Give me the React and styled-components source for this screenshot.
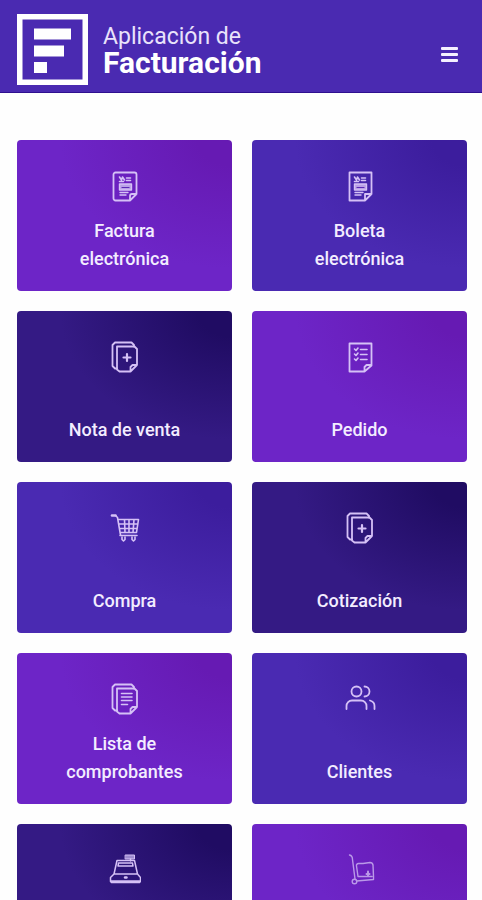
import React from "react";
import styled, {createGlobalStyle} from "styled-components";

const tones = {
    violet: {base: '#6d25c7', corner: '#661ab3'},
    blue: {base: '#4a2ab2', corner: '#3c1d9d'},
    navy: {base: '#341a84', corner: '#200c63'},
}

const GlobalStyle = createGlobalStyle`
  * {
    box-sizing: border-box;
  }
  body {
    margin: 0;
    background: #fefefe;
    font-family: Roboto, "Liberation Sans", sans-serif;
  }
`
const Header = styled.header`
  display: flex;
  align-items: center;
  justify-content: space-between;
  padding: 14px 24px 7px 17px;
  background: #4a2ab1;
  border-bottom: 1px solid #2f108f;
`
const Brand = styled.a`
  display: flex;
  align-items: center;
  gap: 15px;
  color: #fff;
  text-decoration: none;
`
const BrandName = styled.span`
  display: flex;
  flex-direction: column;
  font-size: 23px;
  line-height: 26px;
  color: #e9e2fb;
`
const BrandStrong = styled.strong`
  font-size: 30px;
  font-weight: 700;
  color: #fff;
`
const MenuButton = styled.button`
  display: flex;
  flex-direction: column;
  gap: 3px;
  padding: 12px 0;
  margin-top: 10px;
  border: 0;
  background: none;
  cursor: pointer;
`
const MenuLine = styled.span`
  width: 17px;
  height: 3px;
  border-radius: 1px;
  background: #f4f0ff;
`
const Grid = styled.main`
  display: grid;
  grid-template-columns: repeat(2, 1fr);
  grid-auto-rows: 151px;
  gap: 20px;
  padding: 47px 15px 20px 17px;
`
const Card = styled.a`
  display: flex;
  flex-direction: column;
  align-items: center;
  justify-content: space-between;
  padding: 30px 24px 18px;
  border-radius: 4px;
  color: #f3edff;
  text-decoration: none;
  background: ${({tone}) => `radial-gradient(ellipse 80% 85% at 100% 0%, ${tones[tone].corner} 20%, ${tones[tone].base} 100%)`};
`
const CardLabel = styled.span`
  max-width: 130px;
  font-size: 18px;
  font-weight: 500;
  line-height: 28px;
  text-align: center;
`
const Icon = styled.svg`
  flex: none;
  width: 32px;
  height: 32px;
  fill: none;
  stroke: #d5c1f6;
  stroke-width: 1.8;
  stroke-linecap: round;
  stroke-linejoin: round;
`

const Logo = () => (
    <svg width="71" height="71" viewBox="0 0 71 71" aria-hidden="true">
        <rect x="2.75" y="2.75" width="65.5" height="65.5" fill="none" stroke="#fff" strokeWidth="5.5"/>
        <path fill="#fff" d="M17 14.5h37v11H17zM17 31.5h30v11H17zM17 48h13v11H17z"/>
    </svg>
)

// the printed part shared by the two tax documents
const PrintedLines = () => (
    <>
        <path strokeWidth="1.6" d="M10.5 7l2 3 1-3 2 3M17.5 8h4M17.500 10.500h4M10.5 11.5h4"/>
        <path fill="#b9a0e6" strokeWidth="1.4" d="M10.5 14h12v6h-12z"/>
        <path strokeWidth="1.4" d="M11 22.5h8M11 25h6"/>
        <path stroke="#5b2ab5" strokeWidth="1.2" d="M13 17.5h7"/>
    </>
)

const InvoiceIcon = () => (
    <Icon viewBox="0 0 32 32" aria-hidden="true">
        <path d="M21 30.5H6.5a2 2 0 0 1-2-2v-24a2 2 0 0 1 2-2h19a2 2 0 0 1 2 2V24zM21 30.5V26a2 2 0 0 1 2-2h4.5"/>
        <PrintedLines/>
    </Icon>
)

const TicketIcon = () => (
    <Icon viewBox="0 0 32 32" aria-hidden="true">
        <path d="M21 30.5H5.5v-28h22V24zM21 30.5V24h6.5"/>
        <PrintedLines/>
    </Icon>
)

// two stacked sheets, the front one takes its drawing from children
const SheetsIcon = ({children}) => (
    <Icon viewBox="0 0 32 32" aria-hidden="true">
        <path d="M8 27.5H6L3.5 25V4L6 1.5h16.5L25 4v1.5"/>
        <path d="M21.5 30.5h-11l-2.500-2v-23h17.500l2.5 2.500v16zM21.5 30.5V26l2-2H28"/>
        {children}
    </Icon>
)

const AddSheetIcon = () => (
    <SheetsIcon>
        <path strokeWidth="2.2" d="M18 13v7M14.500 16.500h7"/>
    </SheetsIcon>
)

const ListSheetIcon = () => (
    <SheetsIcon>
        <path strokeWidth="1.6" d="M12.5 10.5H23M12.5 14H23M12.5 17.5H23M12.5 21.5h6"/>
    </SheetsIcon>
)

const OrderIcon = () => (
    <Icon viewBox="0 0 32 32" aria-hidden="true">
        <path d="M20.5 30.5h-15v-28h22v22zM20.5 30.5V26l2-2h5"/>
        <path strokeWidth="1.6" d="M10.5 8l1.500 1.500L14 7M16.5 8.5H23M10.5 13l1.500 1.500L14 12M16.5 13.5H23M10.5 18l1.500 1.500L14 17M16.5 18.5H23"/>
    </Icon>
)

const CartIcon = () => (
    <Icon viewBox="0 0 32 32" aria-hidden="true">
        <path strokeWidth="2.600" d="M3 3.500h3.500"/>
        <path strokeWidth="1.600" d="M6.500 3.500l2 2L11.500 23M9.500 7.500H29.500L27.500 20.500H11.500M10.500 12h18M11 16.500h17M15.500 7.500l.5 13M20 7.500v13M25 7.500l-1 13M11 23.500h17"/>
        <path strokeWidth="1.600" d="M13 25v2.500l1.500 1.500L16 27.500V25M23 25v2.500l1.500 1.500L26 27.500V25"/>
    </Icon>
)

const ClientsIcon = () => (
    <Icon viewBox="0 0 32 32" aria-hidden="true">
        <circle cx="12.5" cy="8.500" r="5"/>
        <path d="M20.5 3.500a5 5 0 0 1 0 10M2.500 26v-3a5.500 5.500 0 0 1 5.500-5.500h9a5.500 5.500 0 0 1 5.500 5.500v3M26 17.500c3 .8 4.500 3 4.500 5.500v3"/>
    </Icon>
)

const RegisterIcon = () => (
    <Icon viewBox="0 0 32 32" aria-hidden="true">
        <path fill="#9d8bcf" strokeWidth="1" d="M16.500 1h9v4h-9z"/>
        <path strokeWidth="1.500" d="M21.500 5v2M5 20L8 6.500h17.500L28.500 20M9.500 9h14l.5 3H9zM5 20h23.500M5 20l-3.500 3.500v4l1 1h28l1-1v-4L28.500 20M2 27h29"/>
        <path strokeWidth="2.400" d="M16 23.500h1.500"/>
    </Icon>
)

const HandTruckIcon = () => (
    <Icon viewBox="0 0 32 32" aria-hidden="true">
        <g strokeWidth="1.400" opacity="0.75">
            <path d="M5.500 1c2.500.5 3 2.500 3 4.500L11 25M19 9.500h-4.500a2 2 0 0 0-2 2.500l1.500 10.500h14M19 9.500l7-1q2.500 0 3 2.500l.5 11.500M12.500 27l17-1.500v-3"/>
            <circle cx="10.500" cy="27.500" r="2.300"/>
            <path strokeWidth="2" d="M24 17.500v4M22.500 20h3"/>
        </g>
    </Icon>
)

const items = [
    {label: 'Factura electrónica', tone: 'violet', Glyph: InvoiceIcon},
    {label: 'Boleta electrónica', tone: 'blue', Glyph: TicketIcon},
    {label: 'Nota de venta', tone: 'navy', Glyph: AddSheetIcon},
    {label: 'Pedido', tone: 'violet', Glyph: OrderIcon},
    {label: 'Compra', tone: 'blue', Glyph: CartIcon},
    {label: 'Cotización', tone: 'navy', Glyph: AddSheetIcon},
    {label: 'Lista de comprobantes', tone: 'violet', Glyph: ListSheetIcon},
    {label: 'Clientes', tone: 'blue', Glyph: ClientsIcon},
    {label: 'Caja', tone: 'navy', Glyph: RegisterIcon},
    {label: 'Inventario', tone: 'violet', Glyph: HandTruckIcon},
]

const App = () => {
    return (
        <>
            <GlobalStyle/>
            <Header>
                <Brand href="#">
                    <Logo/>
                    <BrandName>
                        Aplicación de
                        <BrandStrong>Facturación</BrandStrong>
                    </BrandName>
                </Brand>
                <MenuButton type="button" aria-label="Menú">
                    <MenuLine/>
                    <MenuLine/>
                    <MenuLine/>
                </MenuButton>
            </Header>
            <Grid>
                {items.map(({label, tone, Glyph}) => (
                    <Card key={label} href="#" tone={tone}>
                        <Glyph/>
                        <CardLabel>{label}</CardLabel>
                    </Card>
                ))}
            </Grid>
        </>
    )
}

export default App
